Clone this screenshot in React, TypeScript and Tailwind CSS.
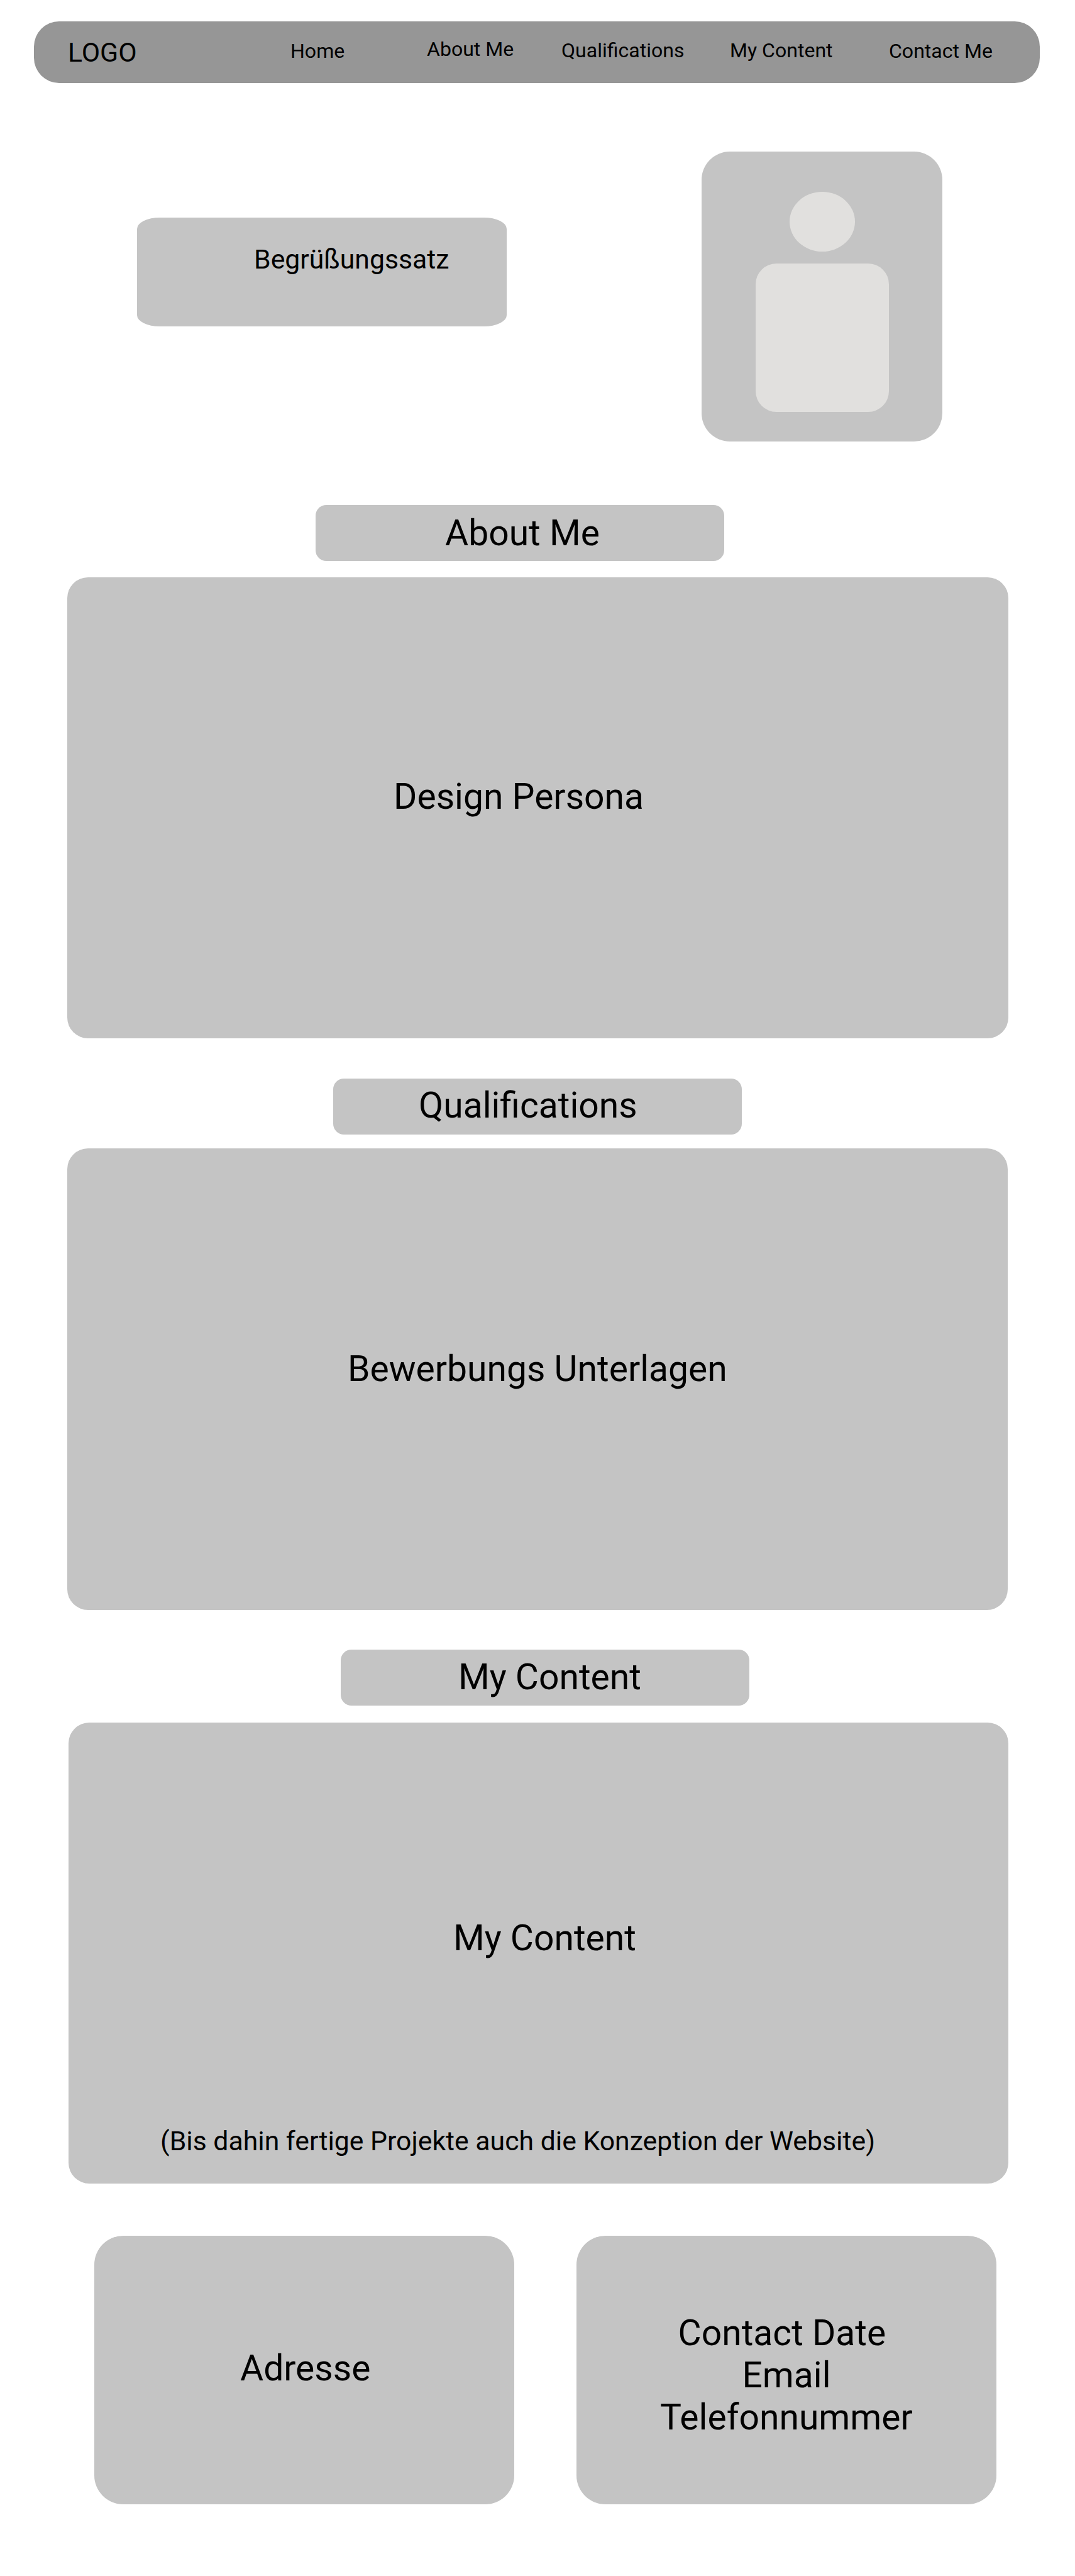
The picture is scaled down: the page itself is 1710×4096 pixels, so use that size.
import type { ReactNode } from "react";

const navItems = [
  { label: "Home", offset: "pt-[28px]" },
  { label: "About Me", offset: "pt-[25px]" },
  { label: "Qualifications", offset: "pt-[27px]" },
  { label: "My Content", offset: "pt-[27px]" },
  { label: "Contact Me", offset: "pt-[28px]" },
];

function NavBar() {
  return (
    <nav className="ml-[54px] grid h-[98px] w-[1600px] grid-cols-[354px_217px_214px_268px_253px_1fr] rounded-[40px] bg-[#969696] pl-[54px]">
      <div className="pt-[24px] text-[42.75px] leading-[50px]">LOGO</div>
      {navItems.map((item) => (
        <a
          key={item.label}
          className={`whitespace-nowrap text-[32.06px] leading-[38px] ${item.offset}`}
        >
          {item.label}
        </a>
      ))}
    </nav>
  );
}

function Hero() {
  return (
    <header className="mt-[109px] flex h-[461px] items-start pl-[218px]">
      <div className="mt-[105px] h-[173px] w-[588px] rounded-[36px/18px] bg-[#c4c4c4] pt-[41px] pl-[186px] text-[42.75px] leading-[50px]">
        Begrüßungssatz
      </div>
      <div className="ml-[310px] flex h-[461px] w-[383px] flex-col items-center rounded-[45px] bg-[#c4c4c4] pt-[64px]">
        <div className="h-[95px] w-[104px] rounded-[50%] bg-[#e1e0de]" />
        <div className="mt-[19px] h-[236px] w-[212px] rounded-[33px] bg-[#e1e0de]" />
      </div>
    </header>
  );
}

function Tab({ className, children }: { className: string; children: ReactNode }) {
  return (
    <h2
      className={`h-[89px] w-[650px] rounded-[17px] bg-[#c4c4c4] text-[57px] leading-[67px] ${className}`}
    >
      {children}
    </h2>
  );
}

function Panel({ className, children }: { className: string; children: ReactNode }) {
  return (
    <div
      className={`rounded-[33px] bg-[#c4c4c4] text-[57px] leading-[67px] ${className}`}
    >
      {children}
    </div>
  );
}

export default function App() {
  return (
    <div className="h-[4096px] w-[1710px] overflow-hidden bg-white pt-[34px] font-['Roboto',sans-serif] text-black">
      <NavBar />
      <Hero />

      <section className="mt-[101px]">
        <Tab className="ml-[502px] pt-[11px] pl-[206px]">About Me</Tab>
        <Panel className="mt-[26px] ml-[107px] h-[733px] w-[1497px] pt-[315px] pl-[519px]">
          Design Persona
        </Panel>
      </section>

      <section className="mt-[64px]">
        <Tab className="ml-[530px] pt-[9px] pl-[136px]">Qualifications</Tab>
        <Panel className="mt-[22px] ml-[107px] h-[734px] w-[1496px] pt-[317px] pl-[446px]">
          Bewerbungs Unterlagen
        </Panel>
      </section>

      <section className="mt-[63px]">
        <Tab className="ml-[542px] pt-[10px] pl-[187px]">My Content</Tab>
        <Panel className="mt-[27px] ml-[109px] h-[733px] w-[1495px] pt-[309px]">
          <p className="pl-[612px]">My Content</p>
          <p className="mt-[264px] pl-[146px] text-[42.75px] leading-[50px]">
            (Bis dahin fertige Projekte auch die Konzeption der Website)
          </p>
        </Panel>
      </section>

      <footer className="mt-[83px] ml-[150px] flex gap-[99px] text-[57px] leading-[67px]">
        <div className="h-[427px] w-[668px] rounded-[46px] bg-[#c4c4c4] pt-[177px] pl-[232px]">
          Adresse
        </div>
        <div className="h-[427px] w-[668px] rounded-[46px] bg-[#c4c4c4] pt-[121px] text-center">
          <p>Contact Date&nbsp;</p>
          <p>Email</p>
          <p>Telefonnummer</p>
        </div>
      </footer>
    </div>
  );
}
